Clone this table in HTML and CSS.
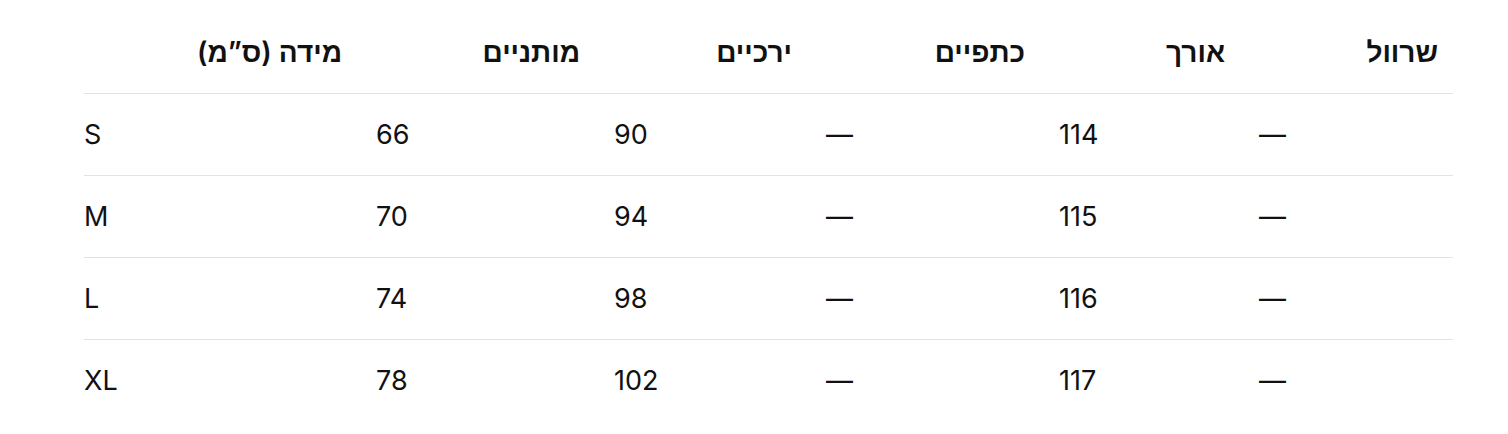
FILE: index.html
```html
<!DOCTYPE html>
<html lang="he">
<head>
<meta charset="utf-8">
<link rel="stylesheet" href="styles.css">
</head>
<body>
<table class="size-table">
  <colgroup>
    <col class="c1"><col class="c2"><col class="c3"><col class="c4"><col class="c5"><col class="c6">
  </colgroup>
  <thead>
    <tr>
      <th dir="rtl">מידה (ס”מ)</th>
      <th dir="rtl">מותניים</th>
      <th dir="rtl">ירכיים</th>
      <th dir="rtl">כתפיים</th>
      <th dir="rtl">אורך</th>
      <th dir="rtl" class="last">שרוול</th>
    </tr>
  </thead>
  <tbody>
    <tr><td>S</td><td>66</td><td>90</td><td>—</td><td>114</td><td>—</td></tr>
    <tr><td>M</td><td>70</td><td>94</td><td>—</td><td>115</td><td>—</td></tr>
    <tr><td>L</td><td>74</td><td>98</td><td>—</td><td>116</td><td>—</td></tr>
    <tr><td>XL</td><td>78</td><td>102</td><td>—</td><td>117</td><td>—</td></tr>
  </tbody>
</table>
</body>
</html>
```

FILE: styles.css
```css
html, body {
  margin: 0;
  padding: 0;
  background: #ffffff;
}

body {
  font-family: "Inter", "Liberation Sans", sans-serif;
  color: #111111;
}

.size-table {
  margin: 11px 0 0 84px;
  width: 1369px;
  border-collapse: collapse;
  table-layout: fixed;
  font-size: 27px;
}

.c1 { width: 292px; }
.c2 { width: 238px; }
.c3 { width: 212px; }
.c4 { width: 233px; }
.c5 { width: 200px; }
.c6 { width: 194px; }

.size-table tr {
  height: 82px;
  border-bottom: 1px solid #e3e3e3;
}

.size-table tbody tr:last-child {
  border-bottom: none;
}

.size-table th {
  text-align: right;
  font-size: 28px;
  font-weight: 600;
  padding: 0 34px 0 0;
  vertical-align: middle;
}

.size-table th.last {
  padding-right: 15px;
}

.size-table td {
  text-align: left;
  font-weight: 400;
  padding: 0;
  vertical-align: middle;
}
```
